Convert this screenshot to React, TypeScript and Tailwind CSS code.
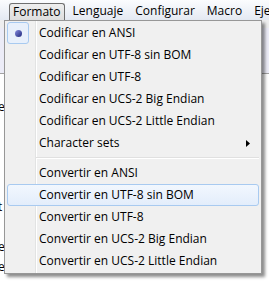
import React from 'react';

const font = { fontFamily: '"Open Sans", "Noto Sans", sans-serif' };

const MenuBar = () => {
  const items = ['Lenguaje', 'Configurar', 'Macro', 'Ejecutar'];
  return (
    <div className="h-[20px] shrink-0 flex items-stretch bg-gradient-to-b from-[#fbfcfe] to-[#e4e9f2] text-[12px] text-black whitespace-nowrap overflow-hidden">
      <div className="ml-[9px] mt-[3px] px-[3px] flex items-center border border-b-0 border-[#6f6f6f] rounded-t-[3px] bg-gradient-to-b from-[#eeeeee] to-[#dedede] leading-none">
        Formato
      </div>
      <div className="flex items-center pt-[2px] pl-[8px] gap-[12px] leading-none">
        {items.map((t) => (
          <span key={t}>{t}</span>
        ))}
      </div>
    </div>
  );
};

const Item = ({ label, checked, active, sub }: { label: string; checked?: boolean; active?: boolean; sub?: boolean }) => (
  <div
    className={`h-[22px] flex items-center rounded-[3px] border ${
      active ? 'border-[#a8caf0] bg-gradient-to-b from-[#f2f7fe] to-[#e3edfb]' : 'border-transparent'
    }`}
  >
    <div className="w-[22px] h-[22px] -my-px -ml-px flex items-center justify-center">
      {checked && (
        <div className="w-[22px] h-[22px] rounded-[3px] border border-[#a8caf0] bg-[#e8f0fb] flex items-center justify-center">
          <div className="w-[7px] h-[7px] rounded-full bg-gradient-to-br from-[#8a8ee0] to-[#22267a]" />
        </div>
      )}
    </div>
    <span className="ml-[10px] text-[12px] leading-none text-black">{label}</span>
    {sub && (
      <svg className="ml-auto mr-[8px]" width="4" height="7" viewBox="0 0 4 7">
        <path d="M0 0 L4 3.5 L0 7 Z" fill="#000" />
      </svg>
    )}
  </div>
);

const FormatMenu = () => (
  <div className="absolute left-[4px] top-[20px] w-[258px] border border-[#979797] bg-[#f0f0f0] py-px px-[2px] shadow-[3px_3px_3px_rgba(0,0,0,0.45)]">
    <div className="absolute left-[30px] top-0 bottom-0 w-[2px] border-l border-[#e2e3e3] bg-white" />
    <div className="relative">
      <Item label="Codificar en ANSI" checked />
      <Item label="Codificar en UTF-8 sin BOM" />
      <Item label="Codificar en UTF-8" />
      <Item label="Codificar en UCS-2 Big Endian" />
      <Item label="Codificar en UCS-2 Little Endian" />
      <Item label="Character sets" sub />
      <div className="h-[8px] flex items-center pl-[29px]">
        <div className="flex-1 h-[2px] border-t border-[#e0e0e0] bg-white" />
      </div>
      <Item label="Convertir en ANSI" />
      <Item label="Convertir en UTF-8 sin BOM" active />
      <Item label="Convertir en UTF-8" />
      <Item label="Convertir en UCS-2 Big Endian" />
      <Item label="Convertir en UCS-2 Little Endian" />
    </div>
  </div>
);

const Editor = () => {
  const lines = ['', 'e', '', '', '', '', 't', '', 'e', 'e'];
  return (
    <div className="flex-1 min-h-0 overflow-hidden bg-white text-[12px] text-black leading-[20px]">
      <div className="h-[8px] bg-[#eeeeee]" />
      <div className="h-[46px] bg-[#ececf7] border-b border-[#a3a3a3]" />
      <div className="pt-[3px]">
        {lines.map((l, i) => (
          <div key={i} className="h-[20px] -ml-[2px] whitespace-nowrap overflow-hidden">
            {l}
          </div>
        ))}
      </div>
    </div>
  );
};

export default function App() {
  return (
    <div className="relative w-[269px] h-[283px] overflow-hidden flex flex-col bg-white" style={font}>
      <MenuBar />
      <Editor />
      <FormatMenu />
    </div>
  );
}
